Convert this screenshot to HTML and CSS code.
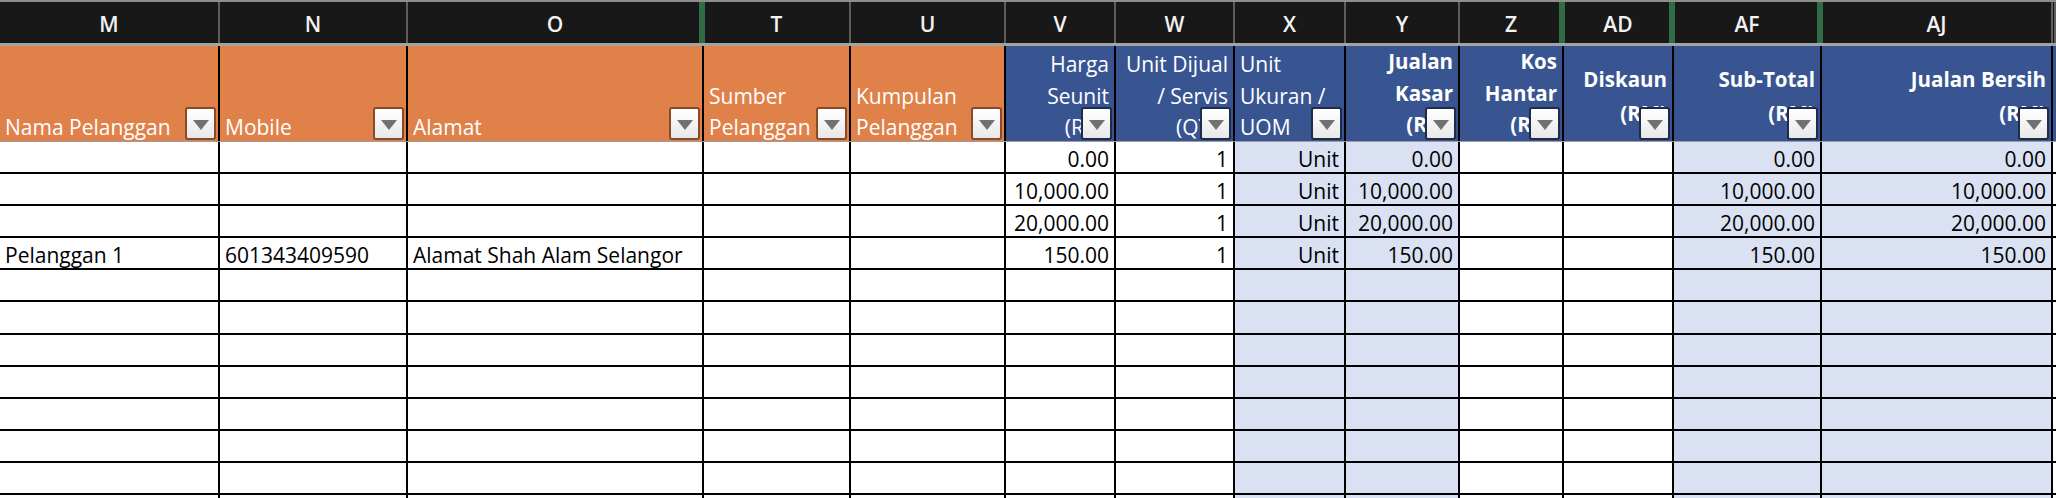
FILE: index.html
```html
<!DOCTYPE html>
<html lang="ms">

<head>
    <meta charset="UTF-8">
    <meta name="viewport" content="width=device-width, initial-scale=1.0">
    <title>Jualan</title>
    <link rel="stylesheet" href="styles.css">
</head>

<body>
    <div class="sheet">
        <!-- column letters -->
        <div class="row letters">
            <div class="col">M</div>
            <div class="col">N</div>
            <div class="col gap">O</div>
            <div class="col">T</div>
            <div class="col">U</div>
            <div class="col">V</div>
            <div class="col">W</div>
            <div class="col">X</div>
            <div class="col">Y</div>
            <div class="col gap">Z</div>
            <div class="col gap">AD</div>
            <div class="col gap">AF</div>
            <div class="col">AJ</div>
            <div class="col"></div>
        </div>

        <!-- header row -->
        <div class="row head">
            <div class="cell orange"><span>Nama Pelanggan</span><i class="filter"></i></div>
            <div class="cell orange"><span>Mobile</span><i class="filter"></i></div>
            <div class="cell orange"><span>Alamat</span><i class="filter"></i></div>
            <div class="cell orange"><span>Sumber<br>Pelanggan</span><i class="filter"></i></div>
            <div class="cell orange"><span>Kumpulan<br>Pelanggan</span><i class="filter"></i></div>
            <div class="cell blue right"><span>Harga<br>Seunit<br>(RM)</span><i class="filter"></i></div>
            <div class="cell blue right"><span>Unit Dijual<br>/ Servis<br>(QTY)</span><i class="filter"></i></div>
            <div class="cell blue"><span>Unit<br>Ukuran /<br>UOM</span><i class="filter"></i></div>
            <div class="cell blue right bold"><span>Jualan<br>Kasar<br>(RM)</span><i class="filter"></i></div>
            <div class="cell blue right bold"><span>Kos<br>Hantar<br>(RM)</span><i class="filter"></i></div>
            <div class="cell blue right bold mid"><span>Diskaun<br>(RM)</span><i class="filter"></i></div>
            <div class="cell blue right bold mid"><span>Sub-Total<br>(RM)</span><i class="filter"></i></div>
            <div class="cell blue right bold mid"><span>Jualan Bersih<br>(RM)</span><i class="filter"></i></div>
            <div class="cell blue last"></div>
        </div>

        <div class="row data">
            <div class="cell"></div>
            <div class="cell"></div>
            <div class="cell"></div>
            <div class="cell"></div>
            <div class="cell"></div>
            <div class="cell num">0.00</div>
            <div class="cell num">1</div>
            <div class="cell num fill">Unit</div>
            <div class="cell num fill">0.00</div>
            <div class="cell"></div>
            <div class="cell"></div>
            <div class="cell num fill">0.00</div>
            <div class="cell num fill">0.00</div>
            <div class="cell last"></div>
        </div>
        <div class="row data">
            <div class="cell"></div>
            <div class="cell"></div>
            <div class="cell"></div>
            <div class="cell"></div>
            <div class="cell"></div>
            <div class="cell num">10,000.00</div>
            <div class="cell num">1</div>
            <div class="cell num fill">Unit</div>
            <div class="cell num fill">10,000.00</div>
            <div class="cell"></div>
            <div class="cell"></div>
            <div class="cell num fill">10,000.00</div>
            <div class="cell num fill">10,000.00</div>
            <div class="cell last"></div>
        </div>
        <div class="row data">
            <div class="cell"></div>
            <div class="cell"></div>
            <div class="cell"></div>
            <div class="cell"></div>
            <div class="cell"></div>
            <div class="cell num">20,000.00</div>
            <div class="cell num">1</div>
            <div class="cell num fill">Unit</div>
            <div class="cell num fill">20,000.00</div>
            <div class="cell"></div>
            <div class="cell"></div>
            <div class="cell num fill">20,000.00</div>
            <div class="cell num fill">20,000.00</div>
            <div class="cell last"></div>
        </div>
        <div class="row data">
            <div class="cell">Pelanggan 1</div>
            <div class="cell">601343409590</div>
            <div class="cell">Alamat Shah Alam Selangor</div>
            <div class="cell"></div>
            <div class="cell"></div>
            <div class="cell num">150.00</div>
            <div class="cell num">1</div>
            <div class="cell num fill">Unit</div>
            <div class="cell num fill">150.00</div>
            <div class="cell"></div>
            <div class="cell"></div>
            <div class="cell num fill">150.00</div>
            <div class="cell num fill">150.00</div>
            <div class="cell last"></div>
        </div>
        <div class="row data">
            <div class="cell"></div><div class="cell"></div><div class="cell"></div><div class="cell"></div><div class="cell"></div><div class="cell"></div><div class="cell"></div>
            <div class="cell fill"></div><div class="cell fill"></div><div class="cell"></div><div class="cell"></div><div class="cell fill"></div><div class="cell fill"></div><div class="cell last"></div>
        </div>
        <div class="row data">
            <div class="cell"></div><div class="cell"></div><div class="cell"></div><div class="cell"></div><div class="cell"></div><div class="cell"></div><div class="cell"></div>
            <div class="cell fill"></div><div class="cell fill"></div><div class="cell"></div><div class="cell"></div><div class="cell fill"></div><div class="cell fill"></div><div class="cell last"></div>
        </div>
        <div class="row data">
            <div class="cell"></div><div class="cell"></div><div class="cell"></div><div class="cell"></div><div class="cell"></div><div class="cell"></div><div class="cell"></div>
            <div class="cell fill"></div><div class="cell fill"></div><div class="cell"></div><div class="cell"></div><div class="cell fill"></div><div class="cell fill"></div><div class="cell last"></div>
        </div>
        <div class="row data">
            <div class="cell"></div><div class="cell"></div><div class="cell"></div><div class="cell"></div><div class="cell"></div><div class="cell"></div><div class="cell"></div>
            <div class="cell fill"></div><div class="cell fill"></div><div class="cell"></div><div class="cell"></div><div class="cell fill"></div><div class="cell fill"></div><div class="cell last"></div>
        </div>
        <div class="row data">
            <div class="cell"></div><div class="cell"></div><div class="cell"></div><div class="cell"></div><div class="cell"></div><div class="cell"></div><div class="cell"></div>
            <div class="cell fill"></div><div class="cell fill"></div><div class="cell"></div><div class="cell"></div><div class="cell fill"></div><div class="cell fill"></div><div class="cell last"></div>
        </div>
        <div class="row data">
            <div class="cell"></div><div class="cell"></div><div class="cell"></div><div class="cell"></div><div class="cell"></div><div class="cell"></div><div class="cell"></div>
            <div class="cell fill"></div><div class="cell fill"></div><div class="cell"></div><div class="cell"></div><div class="cell fill"></div><div class="cell fill"></div><div class="cell last"></div>
        </div>
        <div class="row data">
            <div class="cell"></div><div class="cell"></div><div class="cell"></div><div class="cell"></div><div class="cell"></div><div class="cell"></div><div class="cell"></div>
            <div class="cell fill"></div><div class="cell fill"></div><div class="cell"></div><div class="cell"></div><div class="cell fill"></div><div class="cell fill"></div><div class="cell last"></div>
        </div>
        <div class="row data">
            <div class="cell"></div><div class="cell"></div><div class="cell"></div><div class="cell"></div><div class="cell"></div><div class="cell"></div><div class="cell"></div>
            <div class="cell fill"></div><div class="cell fill"></div><div class="cell"></div><div class="cell"></div><div class="cell fill"></div><div class="cell fill"></div><div class="cell last"></div>
        </div>
    </div>
</body>

</html>
```

FILE: styles.css
```css
html,
body {
    margin: 0;
    padding: 0;
}

*,
*::before,
*::after {
    box-sizing: border-box;
}

body {
    width: 2056px;
    height: 498px;
    overflow: hidden;
    background-color: #fff;
    font-family: "Open Sans", Lato, sans-serif;
    font-size: 21px;
    color: #000;
}

.sheet {
    height: 498px;
    overflow: hidden;
}

.row {
    display: grid;
    grid-template-columns: 220px 188px 296px 147px 155px 110px 119px 111px 114px 104px 110px 148px 231px 1fr;
}

/* column letters */
.letters {
    height: 46px;
    background-color: #181818;
    border-top: 2px solid #8e8e8e;
    border-bottom: 3px solid #a3a3a3;
    color: #f2f2f2;
    font-size: 21px;
    font-weight: 600;
}

.letters .col {
    position: relative;
    display: flex;
    justify-content: center;
    align-items: center;
    padding-top: 3px;
    border-right: 2px solid #5e5e5e;
}

.letters .col.gap::after {
    content: '';
    position: absolute;
    top: 0;
    bottom: 0;
    right: -3px;
    width: 6px;
    background-color: #2f6b45;
}

/* header row */
.head {
    height: 96px;
    border-bottom: 2px solid #9d9d9d;
    color: #fff;
}

.head .cell {
    position: relative;
    display: flex;
    flex-direction: column;
    justify-content: flex-end;
    padding: 0 5px;
    border-right: 2px solid #000;
    line-height: 31.7px;
    white-space: nowrap;
}

.head .cell span {
    margin-bottom: -3px;
}

.head .orange {
    background-color: #e0814a;
}

.head .blue {
    background-color: #385592;
}

.head .right {
    text-align: right;
}

.head .bold {
    font-size: 20.5px;
    font-weight: 700;
}

.head .bold span {
    margin-bottom: 0;
}

.head .mid {
    justify-content: center;
    line-height: 34px;
    padding-top: 4px;
}

.head .last,
.data .last {
    border-right: none;
}

.filter {
    position: absolute;
    right: 2px;
    bottom: 1px;
    width: 31px;
    height: 33px;
    display: flex;
    justify-content: center;
    align-items: center;
    border: 2px solid #1e2b4a;
    border-radius: 3px;
    background: linear-gradient(#ffffff, #e8e8e8);
}

.orange .filter {
    border-color: #8a4a28;
}

.filter::after {
    content: '';
    margin-top: 2px;
    border-left: 8px solid transparent;
    border-right: 8px solid transparent;
    border-top: 10px solid #717171;
}

/* data rows */
.data {
    height: 32.1px;
    border-bottom: 2px solid #000;
}

.data .cell {
    display: flex;
    align-items: flex-end;
    padding: 0 5px 1.5px;
    border-right: 2px solid #000;
    line-height: 24px;
    white-space: nowrap;
}

.data .num {
    justify-content: flex-end;
}

.data .fill {
    background-color: #d9e1f2;
}
```
